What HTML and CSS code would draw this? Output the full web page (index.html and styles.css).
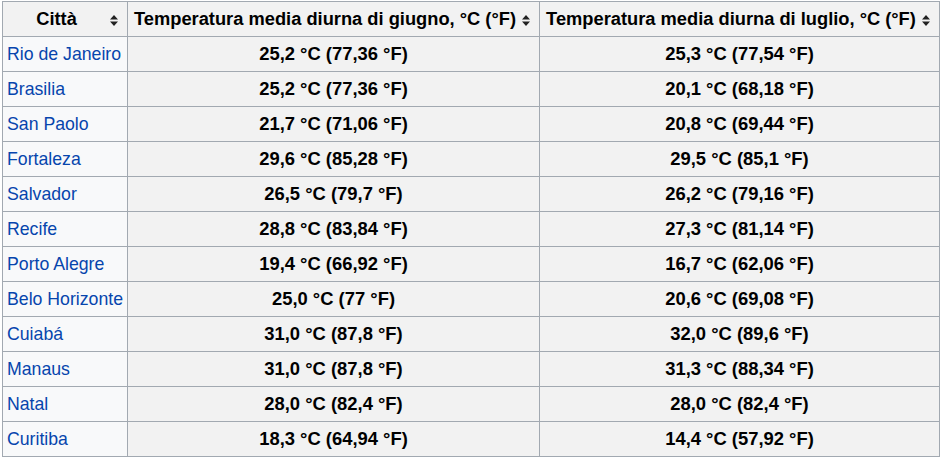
FILE: index.html
```html
<!DOCTYPE html>
<html lang="it">
<head>
<meta charset="utf-8">
<title>Temperature</title>
<link rel="stylesheet" href="styles.css">
</head>
<body>
<table class="wikitable">
  <colgroup>
    <col class="c1">
    <col class="c2">
    <col class="c3">
  </colgroup>
  <thead>
    <tr>
      <th><span class="h">Città</span><svg class="sort" width="8" height="11" viewBox="0 0 8 11"><path d="M0 4.5 L4 0 L8 4.5 Z M0 6.5 L8 6.5 L4 11 Z" fill="#222"/></svg></th>
      <th><span class="h">Temperatura media diurna di giugno, °C (°F)</span><svg class="sort" width="8" height="11" viewBox="0 0 8 11"><path d="M0 4.5 L4 0 L8 4.5 Z M0 6.5 L8 6.5 L4 11 Z" fill="#222"/></svg></th>
      <th><span class="h">Temperatura media diurna di luglio, °C (°F)</span><svg class="sort" width="8" height="11" viewBox="0 0 8 11"><path d="M0 4.5 L4 0 L8 4.5 Z M0 6.5 L8 6.5 L4 11 Z" fill="#222"/></svg></th>
    </tr>
  </thead>
  <tbody>
    <tr><td class="city"><a href="#">Rio de Janeiro</a></td><td>25,2 °C (77,36 °F)</td><td>25,3 °C (77,54 °F)</td></tr>
    <tr><td class="city"><a href="#">Brasilia</a></td><td>25,2 °C (77,36 °F)</td><td>20,1 °C (68,18 °F)</td></tr>
    <tr><td class="city"><a href="#">San Paolo</a></td><td>21,7 °C (71,06 °F)</td><td>20,8 °C (69,44 °F)</td></tr>
    <tr><td class="city"><a href="#">Fortaleza</a></td><td>29,6 °C (85,28 °F)</td><td>29,5 °C (85,1 °F)</td></tr>
    <tr><td class="city"><a href="#">Salvador</a></td><td>26,5 °C (79,7 °F)</td><td>26,2 °C (79,16 °F)</td></tr>
    <tr><td class="city"><a href="#">Recife</a></td><td>28,8 °C (83,84 °F)</td><td>27,3 °C (81,14 °F)</td></tr>
    <tr><td class="city"><a href="#">Porto Alegre</a></td><td>19,4 °C (66,92 °F)</td><td>16,7 °C (62,06 °F)</td></tr>
    <tr><td class="city"><a href="#">Belo Horizonte</a></td><td>25,0 °C (77 °F)</td><td>20,6 °C (69,08 °F)</td></tr>
    <tr><td class="city"><a href="#">Cuiabá</a></td><td>31,0 °C (87,8 °F)</td><td>32,0 °C (89,6 °F)</td></tr>
    <tr><td class="city"><a href="#">Manaus</a></td><td>31,0 °C (87,8 °F)</td><td>31,3 °C (88,34 °F)</td></tr>
    <tr><td class="city"><a href="#">Natal</a></td><td>28,0 °C (82,4 °F)</td><td>28,0 °C (82,4 °F)</td></tr>
    <tr><td class="city"><a href="#">Curitiba</a></td><td>18,3 °C (64,94 °F)</td><td>14,4 °C (57,92 °F)</td></tr>
  </tbody>
</table>
</body>
</html>
```
FILE: styles.css
```css
html, body {
  background: #ffffff;
}
body {
  margin: 1px 2px;
  font-family: "Liberation Sans", Arial, sans-serif;
  font-size: 17.8px;
  color: #000000;
}
.wikitable {
  border-collapse: collapse;
  table-layout: fixed;
  width: 937px;
  background: #f2f2f2;
  border: 1px solid #a2a9b1;
}
.c1 { width: 125px; }
.c2 { width: 412px; }
.c3 { width: 400px; }
.wikitable th,
.wikitable td {
  border: 1px solid #a2a9b1;
  line-height: 20px;
  padding: 7px 4px;
  white-space: nowrap;
}
.wikitable th {
  position: relative;
  background: #f2f2f2;
  text-align: center;
  font-weight: bold;
  font-size: 18.3px;
  padding-right: 21px;
}
.wikitable td {
  text-align: center;
  font-weight: bold;
  font-size: 18.4px;
}
.wikitable td.city {
  text-align: left;
  font-weight: normal;
  font-size: 17.7px;
  background: #f8f9fa;
}
.city a {
  color: #0645ad;
  text-decoration: none;
}
.sort {
  position: absolute;
  right: 9px;
  top: 13px;
  display: block;
}
```
